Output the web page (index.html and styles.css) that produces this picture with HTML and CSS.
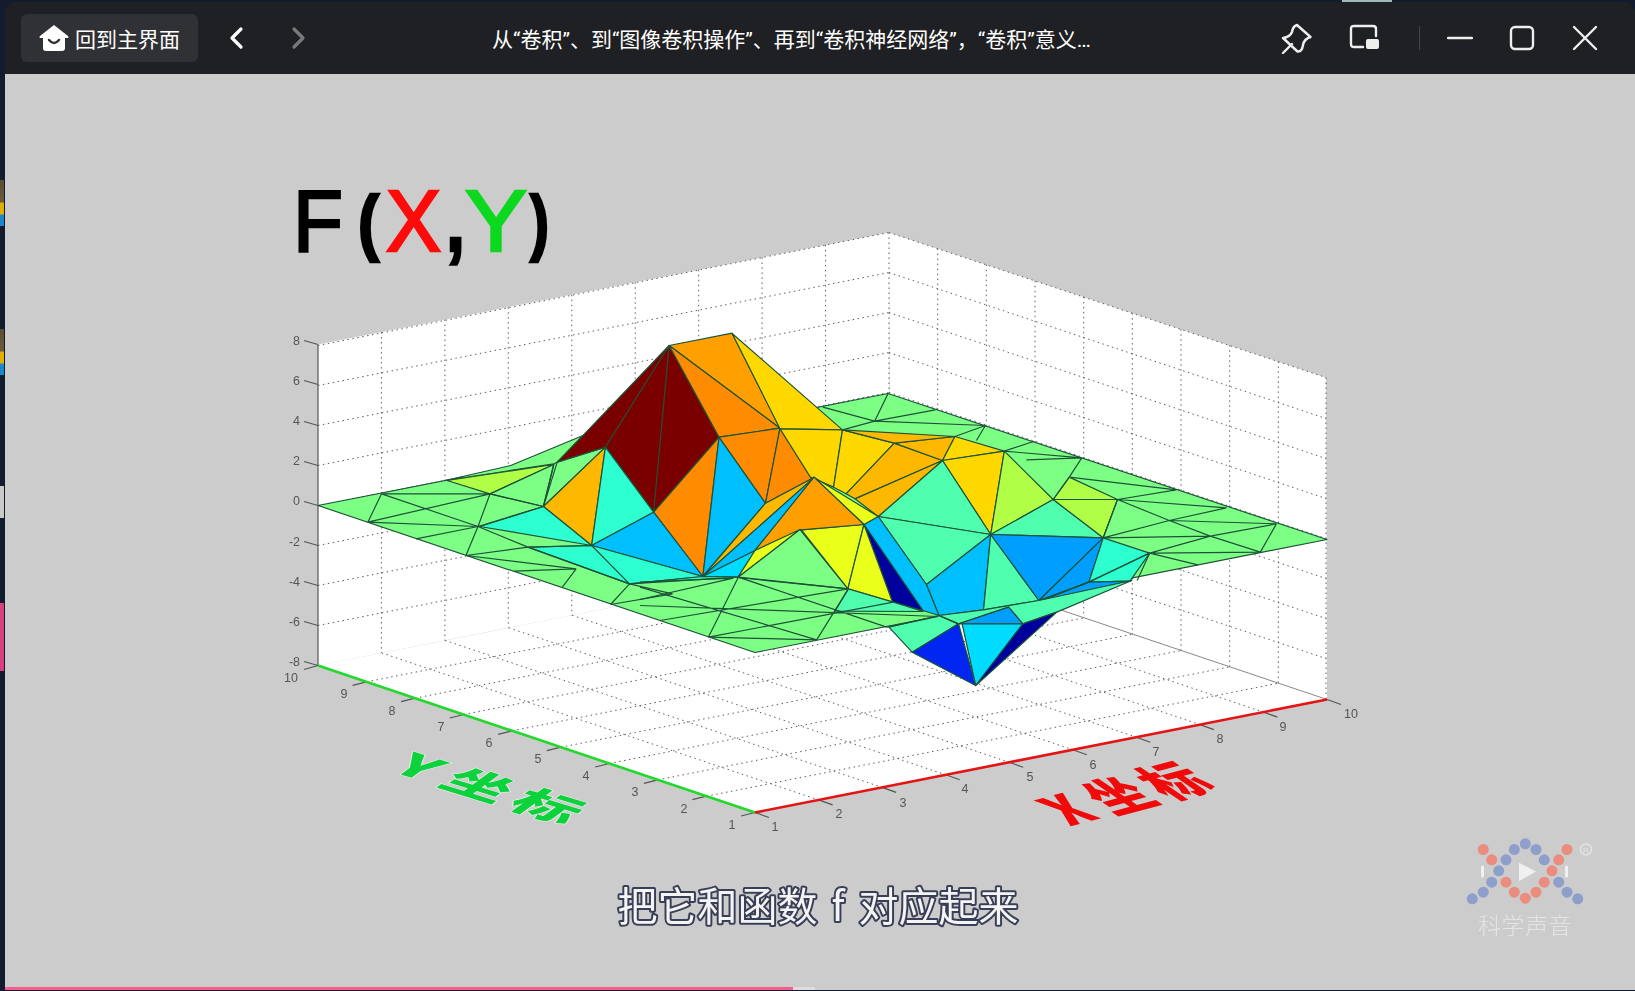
FILE: index.html
```html
<!DOCTYPE html>
<html lang="zh-CN">
    <head>
        <meta charset="UTF-8" />
        <title>从“卷积”、到“图像卷积操作”、再到“卷积神经网络”</title>
        <link rel="stylesheet" href="styles.css">
    </head>
    <body>
        <div class="desk-strip">
            <span class="bit bit-app first"></span>
            <span class="bit bit-app second"></span>
            <span class="bit bit-white"></span>
            <span class="bit bit-pink"></span>
        </div>
        <div class="window">
            <div class="titlebar">
                <div class="nav">
                    <button class="home-btn">
                        <svg class="home-icon" viewBox="0 0 32 32">
                            <path class="home-shape" d="M16 3 L30 14 Q31.5 16 29 16 H27 V26 Q27 29 24 29 H8 Q5 29 5 26 V16 H3 Q.5 16 2 14 Z" />
                            <path class="home-smile" d="M11 18 Q16 24 21 18" />
                        </svg>
                        <span>回到主界面</span>
                    </button>
                    <svg class="chevron" viewBox="0 0 16 24"><path d="M13 3 L4 12 L13 21" /></svg>
                    <svg class="chevron disabled" viewBox="0 0 16 24"><path d="M3 3 L12 12 L3 21" /></svg>
                </div>
                <div class="title">从“卷积”、到“图像卷积操作”、再到“卷积神经网络”，“卷积”意义…</div>
                <div class="controls">
                    <svg class="ctl pin" viewBox="0 0 32 32">
                        <path d="M17 3 L30.5 15 Q24 17 23 23 Q22 30 17.5 29.5 L3 16 Q10 15 12 10 Q13 4 17 3 Z M3 31 L12 22" />
                    </svg>
                    <svg class="ctl pip" viewBox="0 0 32 28">
                        <path d="M14 23 H5 Q2 23 2 20 V5 Q2 2 5 2 H24 Q27 2 27 5 V12" />
                        <rect class="solid" x="17" y="15" width="13" height="10" rx="2" />
                    </svg>
                    <i class="sep"></i>
                    <svg class="ctl min" viewBox="0 0 26 26"><path d="M1 13 H25" /></svg>
                    <svg class="ctl max" viewBox="0 0 26 26"><rect x="2" y="2" width="22" height="22" rx="4" /></svg>
                    <svg class="ctl close" viewBox="0 0 26 26"><path d="M2 2 L24 24 M24 2 L2 24" /></svg>
                </div>
            </div>
            <div class="video">
                <svg class="frame" viewBox="5 74 1630 915">
                    <!-- walls and floor -->
                    <polygon class="wall" points="318,344 889,232 889,552 318,665" />
                    <polygon class="wall" points="889,232 1326,377 1327,699 890,552" />
                    <polygon class="wall" points="318,665 890,552 1327,699 755,812" />

                    <path class="grid" d="M381.4 331.6V652.4M444.9 319.1V639.9M508.3 306.7V627.3M571.8 294.2V614.8M635.2 281.8V602.2M698.7 269.3V589.7M762.1 256.9V577.1M825.6 244.4V564.6M889 232V552
                        M318 625L889 512M318 585L889 472M318 545L889 432M318 505L889 392M318 465L889 352M318 425L889 312M318 385L889 272M318 345L889 232" />
                    <path class="grid" d="M937.7 248.1V568.3M986.3 264.2V584.7M1035 280.3V601M1083.7 296.4V617.3M1132.3 312.6V633.7M1181 328.7V650M1229.7 344.8V666.3M1278.3 360.9V682.7M1326 377V699
                        M889 232L1326 377M889 272L1326 418M889 312L1326 458M889 352L1326 498M889 392L1326 538M889 432L1326 578M889 472L1326 618M889 512L1326 658" />
                    <path class="grid" d="M381.6 652.4L818.6 799.4M445.1 639.9L882.1 786.9M508.7 627.3L945.7 774.3M572.2 614.8L1009.2 761.8M635.8 602.2L1072.8 749.2M699.3 589.7L1136.3 736.7M762.9 577.1L1199.9 724.1M826.4 564.6L1263.4 711.6
                        M366.6 681.3L938.6 568.3M415.1 697.7L987.1 584.7M463.7 714L1035.7 601M512.2 730.3L1084.2 617.3M560.8 746.7L1132.8 633.7M609.3 763L1181.3 650M657.9 779.3L1229.9 666.3M706.4 795.7L1278.4 682.7" />
                    <path class="floor-back" d="M890 552L1327 699" />

                    <!-- axes and ticks -->
                    <path class="axis" d="M318 344V665" />
                    <path class="tick" d="M318 344l-14-4M318 384l-14-4M318 425l-14-4M318 465l-14-4M318 505l-14-4M318 545l-14-4M318 585l-14-4M318 625l-14-4M318 665l-14-4" />
                    <path class="tick" d="M318 665l-14 4M366.6 681.3l-14 3.5M415.1 697.7l-14 3.5M463.7 714l-14 3.5M512.2 730.3l-14 3.5M560.8 746.7l-14 3.5M609.3 763l-14 3.5M657.9 779.3l-14 3.5M706.4 795.7l-14 3.5M755 812l-14 3.5" />
                    <path class="tick" d="M755 812l14 5M818.6 799.4l14 5M882.1 786.9l14 5M945.7 774.3l14 5M1009.2 761.8l14 5M1072.8 749.2l14 5M1136.3 736.7l14 5M1199.9 724.1l14 5M1263.4 711.6l14 5M1327 699l14 5" />
                    <path class="axis-y" d="M318 665L755 812" />
                    <path class="axis-x" d="M755 812L1327 699" />

                    <g class="ticks-text">
                        <text class="end" x="300" y="344">8</text>
                        <text class="end" x="300" y="384">6</text>
                        <text class="end" x="300" y="424">4</text>
                        <text class="end" x="300" y="464">2</text>
                        <text class="end" x="300" y="504">0</text>
                        <text class="end" x="300" y="545">-2</text>
                        <text class="end" x="300" y="585">-4</text>
                        <text class="end" x="300" y="625">-6</text>
                        <text class="end" x="300" y="665">-8</text>
                        <text class="mid" x="291" y="681">10</text>
                        <text class="mid" x="344" y="697">9</text>
                        <text class="mid" x="392" y="714">8</text>
                        <text class="mid" x="441" y="730">7</text>
                        <text class="mid" x="489" y="746">6</text>
                        <text class="mid" x="538" y="762">5</text>
                        <text class="mid" x="586" y="779">4</text>
                        <text class="mid" x="635" y="795">3</text>
                        <text class="mid" x="684" y="812">2</text>
                        <text class="mid" x="732" y="828">1</text>
                        <text class="mid" x="775" y="830">1</text>
                        <text class="mid" x="839" y="817">2</text>
                        <text class="mid" x="903" y="806">3</text>
                        <text class="mid" x="965" y="792">4</text>
                        <text class="mid" x="1030" y="780">5</text>
                        <text class="mid" x="1093" y="768">6</text>
                        <text class="mid" x="1156" y="755">7</text>
                        <text class="mid" x="1220" y="742">8</text>
                        <text class="mid" x="1283" y="730">9</text>
                        <text class="mid" x="1351" y="717">10</text>
                    </g>

                    <!-- surface: flat part, then left half, right half and front middle -->
                    <polygon class="s green" points="318,505 755,652 1327,539 888,393" />
                    <g transform="translate(280 320) scale(.34435 .33333)">
                        <polygon class="s green" points="480,480 670,435 880,345 805,425 795,430" />
                        <polygon class="s lime" points="485,480 610,520 795,432" />
                        <polygon class="s green" points="795,432 610,520 765,558" />
                        <polygon class="s green" points="805,425 945,380 765,558" />
                        <polygon class="s maroon" points="805,425 880,345 1130,75 1275,350 1085,575 945,380" />
                        <path class="s-line" d="M945 380L1130 75M1085 575L1130 75" />
                        <polygon class="s amber" points="765,558 945,380 905,675" />
                        <polygon class="s mint" points="945,380 1085,575 905,675" />
                        <polygon class="s orange-l" points="1130,75 1313,38 1452,323" />
                        <polygon class="s orange" points="1130,75 1452,323 1275,350" />
                        <polygon class="s orange" points="1275,350 1085,575 1228,768" />
                        <polygon class="s sky" points="1275,350 1410,548 1228,768" />
                        <polygon class="s orange" points="1275,350 1452,323 1410,548" />
                        <polygon class="s orange" points="1452,323 1552,470 1410,548" />
                        <polygon class="s sky" points="1085,575 905,675 1228,768" />
                        <polygon class="s mint" points="905,675 1228,768 1015,790 720,680" />
                        <polygon class="s mint" points="580,618 765,558 905,675" />
                        <polygon class="s amber" points="1228,768 1410,548 1552,470" />
                        <polygon class="s sky" points="1228,768 1552,470 1380,690" />
                        <polygon class="s cyan" points="1228,768 1380,690 1330,770" />
                        <polygon class="s mint" points="1015,790 1228,768 1330,770" />
                        <path class="s-line" d="M295 520L255 605M295 520L610 520M295 520L575 618M255 605L610 520M255 605L575 618M610 520L575 618M575 618L395 655M575 618L540 705M610 520L765 558M575 618L765 558M795 432L765 558M575 618L720 680M720 680L540 705M540 705L860 745M680 752L860 745M860 745L820 800M720 680L1015 790M1015 790L960 852M960 852L1140 820M1015 790L1140 820M905 675L1015 790M720 680L905 675" />
                    </g>
                    <g transform="translate(780 380) scale(.35714 .33333)">
                        <polygon class="s gold" points="-134,-141 175,148 0,145" />
                        <polygon class="s gold" points="0,145 175,148 150,320 85,290" />
                        <polygon class="s gold" points="175,148 320,188 185,340 150,320" />
                        <polygon class="s amber" points="320,188 455,240 210,355 185,340" />
                        <polygon class="s amber" points="320,188 490,168 455,240" />
                        <polygon class="s amber" points="175,148 320,188 490,168" />
                        <polygon class="s gold" points="490,168 628,212 455,240" />
                        <polygon class="s gold" points="455,240 628,212 590,462" />
                        <polygon class="s lime" points="628,212 765,357 590,462" />
                        <polygon class="s teal" points="765,357 905,472 590,462" />
                        <polygon class="s lime" points="765,357 945,357 905,472" />
                        <polygon class="s lime" points="810,290 945,357 765,357" />
                        <polygon class="s teal" points="455,240 590,462 275,408" />
                        <polygon class="s amber" points="210,355 455,240 275,408" />
                        <polygon class="s teal" points="275,408 590,462 410,612" />
                        <polygon class="s sky" points="410,612 590,462 570,688 445,705" />
                        <polygon class="s teal" points="590,462 725,660 570,688" />
                        <polygon class="s azure" points="590,462 905,472 725,660" />
                        <polygon class="s azure" points="905,472 865,605 725,660" />
                        <polygon class="s mint" points="905,472 1035,518 865,605" />
                        <polygon class="s mint" points="1035,518 980,602 865,605" />
                        <polygon class="s azure" points="865,605 980,602 730,660" />
                        <polygon class="s navy" points="730,660 865,605 780,640" />
                        <polygon class="s sky" points="275,408 410,612 445,705 400,690 235,432" />
                        <polygon class="s navy" points="235,432 315,665 400,690" />
                        <polygon class="s yellow" points="95,290 275,408 235,432" />
                        <polygon class="s yellow" points="60,448 235,432 190,625" />
                        <polygon class="s yellow" points="235,432 315,665 190,625" />
                        <polygon class="s orange-l" points="95,290 235,432 60,448 -70,510" />
                        <polygon class="s yellow" points="-118,591 -70,510 56,447" />
                        <polygon class="s green" points="-118,591 56,447 190,625" />
                        <polygon class="s teal" points="305,740 370,815 500,730 445,705" />
                        <polygon class="s teal" points="445,705 570,688 725,660 985,600 775,695 680,730 640,680 500,730" />
                        <polygon class="s azure" points="500,730 640,680 680,730" />
                        <polygon class="s blue" points="370,815 500,730 548,915" />
                        <polygon class="s cyan" points="510,730 680,730 548,915" />
                        <polygon class="s navy" points="680,730 775,695 548,915" />
                        <path class="s-line" d="M120 80L265 122M265 122L303 38M265 122L435 88M265 122L575 135M175 148L265 122M575 135L550 180M490 168L575 135M628 212L710 183M690 238L845 232M628 212L845 232M845 232L810 290M810 290L1110 328M765 357L810 290M945 357L1110 328M945 357L1250 382M1090 420L1250 382M1090 420L1390 430M905 472L1090 420M905 472L1205 467M945 357L905 472M945 357L1090 420M1090 420L1205 467M1035 518L1205 467M1045 518L1345 515M1205 467L1345 515M1345 515L1390 430M1205 467L1390 430M1035 518L1170 553M1035 518L1000 600M445 705L500 730" />
                    </g>
                    <g transform="translate(640 530) scale(.33333)">
                        <polygon class="s teal" points="625,175 760,215 850,243 585,242" />
                        <path class="s-line" d="M0 155L280 143M295 140L625 175M295 140L205 320M295 140L740 290M0 170L530 328M0 207L280 143M0 225L895 258M60 270L625 175M205 320L760 215M205 320L530 328M625 175L530 328M740 290L895 258" />
                    </g>

                    <!-- formula -->
                    <g class="formula">
                        <text x="293" y="250" textLength="50" lengthAdjust="spacingAndGlyphs">F</text>
                        <text class="heavy paren" x="358" y="246" textLength="21" lengthAdjust="spacingAndGlyphs">(</text>
                        <text class="red" x="386" y="250" textLength="55" lengthAdjust="spacingAndGlyphs">X</text>
                        <text class="heavy" x="446" y="250" textLength="19" lengthAdjust="spacingAndGlyphs">,</text>
                        <text class="lime-green" x="465" y="250" textLength="62" lengthAdjust="spacingAndGlyphs">Y</text>
                        <text class="heavy paren" x="530" y="246" textLength="19" lengthAdjust="spacingAndGlyphs">)</text>
                    </g>

                    <!-- labels lying on the floor -->
                    <text class="floor-label green-label" transform="matrix(1.3 .4 -.75 .55 388 770)">Y<tspan dx="2">坐标</tspan></text>
                    <text class="floor-label red-label" transform="matrix(1.05 -.28 1.1 .75 1070 826)">X<tspan dx="4">坐标</tspan></text>

                    <!-- logo -->
                    <g class="logo">
                        <circle class="dot-red" cx="1483.3" cy="849" r="5.5" /><circle class="dot-red" cx="1491.7" cy="859.3" r="5.5" /><circle class="dot-red" cx="1506" cy="881.7" r="5.5" /><circle class="dot-red" cx="1514.3" cy="891.7" r="5.5" /><circle class="dot-red" cx="1525.3" cy="897.7" r="5.5" /><circle class="dot-red" cx="1536" cy="891.7" r="5.5" /><circle class="dot-red" cx="1544.3" cy="881.7" r="5.5" /><circle class="dot-red" cx="1552" cy="870.3" r="5.5" /><circle class="dot-red" cx="1558.7" cy="859.3" r="5.5" /><circle class="dot-red" cx="1567" cy="849" r="5.5" />
                        <circle class="dot-blue" cx="1472.3" cy="898.3" r="5.5" /><circle class="dot-blue" cx="1483.3" cy="891.7" r="5.5" /><circle class="dot-blue" cx="1491.7" cy="881.7" r="5.5" /><circle class="dot-blue" cx="1498.7" cy="870.3" r="5.5" /><circle class="dot-blue" cx="1506" cy="859.3" r="5.5" /><circle class="dot-blue" cx="1514.3" cy="849" r="5.5" /><circle class="dot-blue" cx="1525.3" cy="843.3" r="5.5" /><circle class="dot-blue" cx="1536" cy="849" r="5.5" /><circle class="dot-blue" cx="1544.3" cy="859.3" r="5.5" /><circle class="dot-blue" cx="1558.7" cy="881.7" r="5.5" /><circle class="dot-blue" cx="1567" cy="891.7" r="5.5" /><circle class="dot-blue" cx="1577.7" cy="898.3" r="5.5" />
                        <polygon class="logo-white" points="1519,862.3 1519,880.7 1536,871" />
                        <rect class="logo-white" x="1481" y="865" width="3" height="12" rx="1.5" />
                        <rect class="logo-white" x="1565" y="865" width="3" height="12" rx="1.5" />
                        <circle class="logo-reg" cx="1586" cy="849" r="5.5" />
                        <text class="logo-reg-text" x="1586" y="852">R</text>
                        <text class="logo-name" x="1525" y="933">科学声音</text>
                    </g>

                    <text class="subtitle" x="818" y="920">把它和函数 f 对应起来</text>
                </svg>
                <div class="progress">
                    <div class="played"></div>
                    <div class="buffered"></div>
                </div>
            </div>
        </div>
    </body>
</html>
```

FILE: styles.css
```css
* {
    margin: 0;
    padding: 0;
    box-sizing: border-box;
}

body {
    display: flex;
    width: 1635px;
    height: 991px;
    overflow: hidden;
    background: linear-gradient(#9fb8b8, #9fb8b8) 1342px 0 / 50px 2px no-repeat, #131b2e;
    font-family: "Noto Sans CJK SC", "Noto Sans", sans-serif;
}

.desk-strip {
    display: flex;
    flex-direction: column;
    flex: 0 0 5px;
}

.bit {
    display: block;
    width: 4px;
}

.bit-app {
    height: 46px;
    background: linear-gradient(#5a4c32 0, #6b5a3a 48%, #e0b000 50%, #e0b000 74%, #1a88c8 76%, #1a88c8 100%);
}

.bit-app.first {
    margin-top: 180px;
}

.bit-app.second {
    margin-top: 103px;
}

.bit-white {
    height: 32px;
    margin-top: 111px;
    background-color: #c9c9c9;
}

.bit-pink {
    height: 68px;
    margin-top: 85px;
    background-color: #d8407e;
}

.window {
    display: flex;
    flex-direction: column;
    flex: 1;
    height: 988px;
    margin-top: 2px;
    border-top-left-radius: 10px;
    border-top-right-radius: 10px;
    overflow: hidden;
}

.titlebar {
    display: flex;
    align-items: center;
    flex: 0 0 72px;
    background-color: #1f2023;
}

.nav {
    display: flex;
    align-items: center;
    flex: 0 0 302px;
    padding-left: 16px;
}

.home-btn {
    display: flex;
    align-items: center;
    width: 177px;
    height: 48px;
    padding-left: 17px;
    border: 0;
    border-radius: 6px;
    background-color: #303135;
    color: #ffffff;
    font-family: inherit;
    font-size: 21px;
}

.home-icon {
    width: 32px;
    height: 32px;
    margin-right: 5px;
}

.home-shape {
    fill: #ffffff;
}

.home-smile {
    fill: none;
    stroke: #303135;
    stroke-width: 2.5;
    stroke-linecap: round;
}

.chevron {
    width: 16px;
    height: 24px;
    fill: none;
    stroke: #ffffff;
    stroke-width: 3.2;
    stroke-linecap: round;
    stroke-linejoin: round;
    margin-left: 30px;
}

.chevron.disabled {
    stroke: #7a7a7a;
    margin-left: 47px;
}

.title {
    flex: 1;
    padding-left: 185px;
    color: #ffffff;
    font-family: "Roboto", "Noto Sans CJK SC", sans-serif;
    font-size: 21px;
    white-space: nowrap;
}

.controls {
    display: flex;
    align-items: center;
    flex: 0 0 356px;
    padding-left: 1px;
}

.ctl {
    fill: none;
    stroke: #eeeeee;
    stroke-width: 2.4;
    stroke-linecap: round;
    stroke-linejoin: round;
}

.pin {
    width: 32px;
    height: 32px;
}

.pip {
    width: 32px;
    height: 28px;
    margin-left: 37px;
}

.pip .solid {
    fill: #eeeeee;
    stroke: none;
}

.sep {
    width: 1px;
    height: 24px;
    margin-left: 38px;
    background-color: #44464b;
}

.min {
    width: 26px;
    height: 26px;
    margin-left: 27px;
}

.max {
    width: 26px;
    height: 26px;
    margin-left: 36px;
}

.close {
    width: 26px;
    height: 26px;
    margin-left: 37px;
}

.video {
    position: relative;
    flex: 1;
    background-color: #cccccc;
}

.frame {
    display: block;
    width: 1630px;
    height: 916px;
    filter: blur(.5px);
}

.progress {
    position: absolute;
    left: 0;
    right: 0;
    bottom: 0;
    display: flex;
    height: 3px;
}

.played {
    width: 788px;
    background-color: #ff5c8e;
}

.buffered {
    width: 22px;
    background-color: #dedede;
}

.wall {
    fill: #ffffff;
}

.grid {
    fill: none;
    stroke: #5f5f5f;
    stroke-width: 1;
    stroke-dasharray: 1.5 3.5;
}

.floor-back {
    stroke: #8a8a8a;
    stroke-width: 1;
}

.axis {
    stroke: #555555;
    stroke-width: 1.2;
}

.tick {
    fill: none;
    stroke: #555555;
    stroke-width: 1.2;
}

.axis-y {
    stroke: #22d82a;
    stroke-width: 2.6;
}

.axis-x {
    stroke: #e41414;
    stroke-width: 2.6;
}

.ticks-text text {
    fill: #555555;
    font-family: "Liberation Sans", sans-serif;
    font-size: 12.5px;
}

.ticks-text .end {
    text-anchor: end;
}

.ticks-text .mid {
    text-anchor: middle;
}

.s {
    stroke: #1d5238;
    stroke-width: 1.2;
    stroke-linejoin: round;
    vector-effect: non-scaling-stroke;
}

.s-line {
    fill: none;
    stroke: #1d5238;
    stroke-width: 1.2;
    vector-effect: non-scaling-stroke;
}

.green { fill: #7dff85; }
.teal { fill: #4fffaf; }
.mint { fill: #2dffd0; }
.cyan { fill: #00dcff; }
.sky { fill: #00bfff; }
.azure { fill: #009fff; }
.blue { fill: #0026f0; }
.navy { fill: #00009c; }
.lime { fill: #b0ff46; }
.yellow { fill: #eaff1a; }
.gold { fill: #ffd800; }
.amber { fill: #ffb800; }
.orange-l { fill: #ff9f00; }
.orange { fill: #ff8c00; }
.maroon { fill: #7a0000; }

.formula text {
    fill: #000000;
    stroke: #000000;
    stroke-width: 2.6px;
    font-family: "Liberation Sans", sans-serif;
    font-size: 88px;
}

.formula .heavy {
    font-weight: 700;
}

.formula .paren {
    font-size: 72px;
}

.formula .red {
    fill: #ff0a0a;
    stroke: #ff0a0a;
}

.formula .lime-green {
    fill: #0cd820;
    stroke: #0cd820;
}

.floor-label {
    font-size: 46px;
    font-weight: 900;
    letter-spacing: 7px;
    paint-order: stroke fill;
    stroke: #ffffff;
    stroke-width: 1.5px;
    stroke-opacity: .6;
}

.green-label {
    fill: #0cd23c;
}

.red-label {
    fill: #f00a0a;
    stroke: none;
}

.dot-red {
    fill: #ea8d7f;
}

.dot-blue {
    fill: #8f9fcc;
}

.logo-white {
    fill: #f0f0f0;
}

.logo-reg {
    fill: none;
    stroke: #e2e2e2;
    stroke-width: 1.5;
}

.logo-reg-text {
    fill: #e2e2e2;
    font-family: "Liberation Sans", sans-serif;
    font-size: 8px;
    text-anchor: middle;
}

.logo-name {
    fill: #e4e4e4;
    font-size: 23px;
    font-weight: 300;
    letter-spacing: 0.5px;
    text-anchor: middle;
}

.subtitle {
    fill: #f4f4f4;
    font-size: 40px;
    word-spacing: 5px;
    text-anchor: middle;
    paint-order: stroke fill;
    stroke: #3a3f58;
    stroke-width: 4px;
    stroke-linejoin: round;
}
```
